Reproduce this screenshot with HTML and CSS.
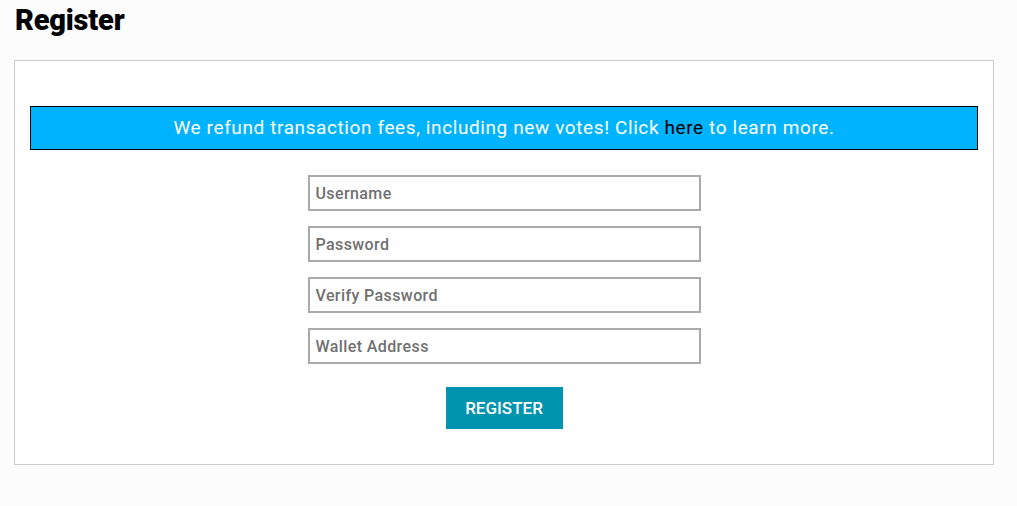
FILE: index.html
```html
<!DOCTYPE html>
<html>
<head>
<meta charset="utf-8">
<link rel="stylesheet" href="styles.css">
</head>
<body>
<h1 class="title">Register</h1>
<div class="card">
  <div class="banner">We refund transaction fees, including new votes! Click <a class="banner-link" href="#">here</a> to learn more.</div>
  <form class="form">
    <input class="field" type="text" placeholder="Username">
    <input class="field" type="password" placeholder="Password">
    <input class="field" type="password" placeholder="Verify Password">
    <input class="field" type="text" placeholder="Wallet Address">
    <button class="btn" type="button">REGISTER</button>
  </form>
</div>
</body>
</html>
```

FILE: styles.css
```css
html, body {
  margin: 0;
  padding: 0;
  background: #fcfcfc;
}
body {
  font-family: Roboto, "Liberation Sans", sans-serif;
  padding: 0 23px 0 14px;
}
.title {
  margin: 0;
  padding: 3px 0 0 1px;
  height: 60px;
  box-sizing: border-box;
  font-size: 29px;
  font-weight: 900;
  color: #000;
  letter-spacing: -0.2px;
}
.card {
  background: #fff;
  border: 1px solid #ccc;
  padding: 45px 15px 35px;
  display: flex;
  flex-direction: column;
  align-items: center;
}
.banner {
  align-self: stretch;
  background: #00b3ff;
  border: 1px solid #000;
  color: #fff;
  height: 42px;
  display: flex;
  align-items: center;
  justify-content: center;
  font-size: 19px;
  letter-spacing: 0.6px;
  margin-bottom: 25px;
  padding-bottom: 2px;
  box-sizing: border-box;
  height: 44px;
  white-space: pre;
}
.banner-link {
  color: #000;
  text-decoration: none;
}
.form {
  display: flex;
  flex-direction: column;
  align-items: center;
  gap: 15px;
}
.field {
  width: 393px;
  height: 36px;
  box-sizing: border-box;
  border: 2px solid #aaa;
  padding: 0 6px;
  font-family: inherit;
  font-size: 16px;
  font-weight: 500;
  letter-spacing: 0.4px;
  color: #555;
  outline: none;
}
.field::placeholder {
  color: #707070;
}
.btn {
  margin-top: 8px;
  width: 117px;
  height: 42px;
  background: #0094af;
  border: none;
  color: #fff;
  font-family: inherit;
  font-size: 17px;
  font-weight: 500;
  letter-spacing: 0;
  padding: 0;
}
```
